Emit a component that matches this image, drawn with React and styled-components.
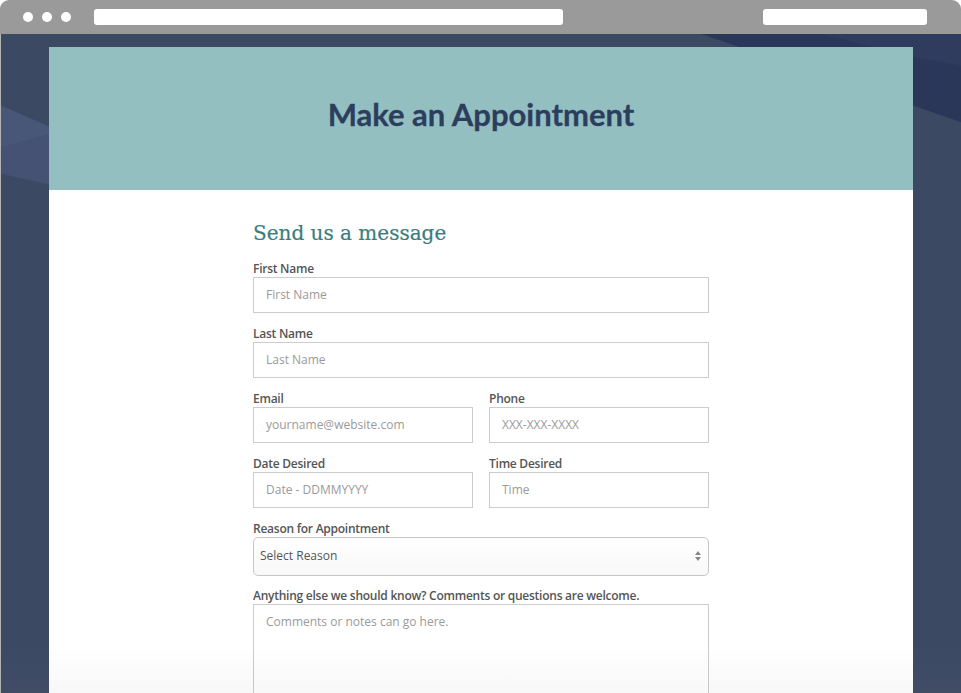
import React from "react";
import styled, { createGlobalStyle } from "styled-components";

const GlobalStyle = createGlobalStyle`
  body {
    margin: 0;
    background: #ffffff;
    font-family: "Open Sans", "Noto Sans", Arial, sans-serif;
  }
`;

const Window = styled.div`
  position: relative;
  width: 961px;
  height: 693px;
  overflow: hidden;
  border-radius: 9px 9px 0 0;
  background: #9a9a9a;
  display: flex;
  flex-direction: column;
`;

const Chrome = styled.div`
  height: 34px;
  flex-shrink: 0;
  display: flex;
  align-items: center;
  padding: 0 34px 0 23px;
`;

const Dots = styled.div`
  display: flex;
  gap: 9px;
  margin-right: 23px;
`;

const Dot = styled.span`
  width: 10px;
  height: 10px;
  border-radius: 50%;
  background: #ffffff;
`;

const Bar = styled.div`
  width: ${(p) => p.w}px;
  height: 16px;
  border-radius: 3px;
  background: #ffffff;
`;

const Spacer = styled.div`
  flex: 1;
`;

const Viewport = styled.div`
  position: relative;
  flex: 1;
  background: #3c4963;
  border-left: 1px solid #b4b4b4;
  padding: 13px 48px 0 48px;
`;

const Backdrop = styled.svg`
  position: absolute;
  inset: 0;
  width: 100%;
  height: 100%;
`;

const Card = styled.div`
  position: relative;
  background: #ffffff;
  height: 100%;
`;

const Header = styled.header`
  height: 143px;
  box-sizing: border-box;
  padding-bottom: 10px;
  background: #94bfc0;
  display: flex;
  align-items: center;
  justify-content: center;
`;

const Title = styled.h1`
  margin: 0;
  font-family: Lato, "Open Sans", sans-serif;
  font-weight: 700;
  font-size: 31px;
  color: #2c3e5e;
  -webkit-text-stroke: 0.3px #2c3e5e;
`;

const Body = styled.div`
  padding-top: 29px;
`;

const Form = styled.form`
  width: 456px;
  margin: 0 auto;
`;

const Heading = styled.h2`
  margin: 0 0 13px;
  font-family: "DejaVu Serif", "Liberation Serif", serif;
  font-weight: 400;
  font-size: 20px;
  line-height: 28px;
  color: #3a7d7e;
  -webkit-text-stroke: 0.2px #3a7d7e;
`;

const Row = styled.div`
  display: grid;
  grid-template-columns: 1fr 1fr;
  column-gap: 16px;
`;

const Field = styled.div`
  position: relative;
  margin-bottom: ${(p) => (p.tight ? 11 : 12)}px;
`;

const Label = styled.label`
  display: block;
  font-size: 12px;
  font-weight: 600;
  line-height: 15px;
  color: #555555;
  padding-top: 1px;
  margin-bottom: 1px;
  letter-spacing: -0.25px;
`;

const Input = styled.input`
  display: block;
  width: 100%;
  box-sizing: border-box;
  height: 36px;
  border: 1px solid #cccccc;
  padding: 0 12px 2px;
  font-family: "Open Sans", sans-serif;
  font-size: 12px;
  color: #555555;
  background: #ffffff;
  outline: none;

  &::placeholder {
    color: #9a9a9a;
  }
`;

const SelectBox = styled.div`
  position: relative;
`;

const Select = styled.select`
  display: block;
  width: 100%;
  height: 39px;
  appearance: none;
  border: 1px solid #c6c6c6;
  border-radius: 5px;
  padding: 0 6px 2px;
  font-family: "Open Sans", sans-serif;
  font-size: 12px;
  color: #555555;
  background: linear-gradient(#ffffff, #f8f8f8);
  outline: none;
`;

const Arrows = styled.svg`
  position: absolute;
  right: 8px;
  top: 14px;
  pointer-events: none;
`;

const TextArea = styled.textarea`
  display: block;
  width: 100%;
  box-sizing: border-box;
  height: 110px;
  border: 1px solid #cccccc;
  padding: 8px 12px;
  font-family: "Open Sans", sans-serif;
  font-size: 12px;
  line-height: 18px;
  color: #555555;
  resize: vertical;
  outline: none;

  &::placeholder {
    color: #9a9a9a;
  }
`;

const Fade = styled.div`
  position: absolute;
  left: 0;
  right: 0;
  bottom: 0;
  height: 48px;
  background: linear-gradient(rgba(130, 130, 130, 0), rgba(130, 130, 130, 0.06));
  pointer-events: none;
`;

const TextField = ({ label, placeholder }) => (
  <Field>
    <Label>{label}</Label>
    <Input placeholder={placeholder} />
  </Field>
);

const App = () => {
  return (
    <>
      <GlobalStyle />
      <Window>
        <Chrome>
          <Dots>
            <Dot />
            <Dot />
            <Dot />
          </Dots>
          <Bar w={469} />
          <Spacer />
          <Bar w={164} />
        </Chrome>
        <Viewport>
          <Backdrop viewBox="0 0 960 659" preserveAspectRatio="none">
            <polygon points="0,68 48,88 48,96 0,108" fill="#485677" />
            <polygon points="0,108 48,96 48,143 0,133" fill="#455274" />
            <polygon points="700,0 960,0 960,84 912,68" fill="#2b3759" />
            <polygon points="820,0 960,0 960,30 912,22" fill="#2f3c5d" />
          </Backdrop>
          <Card>
            <Header>
              <Title>Make an Appointment</Title>
            </Header>
            <Body>
              <Form>
                <Heading>Send us a message</Heading>
                <TextField label="First Name" placeholder="First Name" />
                <TextField label="Last Name" placeholder="Last Name" />
                <Row>
                  <TextField label="Email" placeholder="yourname@website.com" />
                  <TextField label="Phone" placeholder="XXX-XXX-XXXX" />
                </Row>
                <Row>
                  <TextField label="Date Desired" placeholder="Date - DDMMYYYY" />
                  <TextField label="Time Desired" placeholder="Time" />
                </Row>
                <Field tight>
                  <Label>Reason for Appointment</Label>
                  <SelectBox>
                    <Select defaultValue="">
                      <option value="">Select Reason</option>
                    </Select>
                    <Arrows width="6" height="10" viewBox="0 0 6 10">
                      <path d="M3 0 L6 4 L0 4 Z" fill="#888" />
                      <path d="M3 10 L6 6 L0 6 Z" fill="#888" />
                    </Arrows>
                  </SelectBox>
                </Field>
                <Field>
                  <Label>
                    Anything else we should know? Comments or questions are welcome.
                  </Label>
                  <TextArea placeholder="Comments or notes can go here." />
                </Field>
              </Form>
            </Body>
          </Card>
        </Viewport>
        <Fade />
      </Window>
    </>
  );
};

export default App;
